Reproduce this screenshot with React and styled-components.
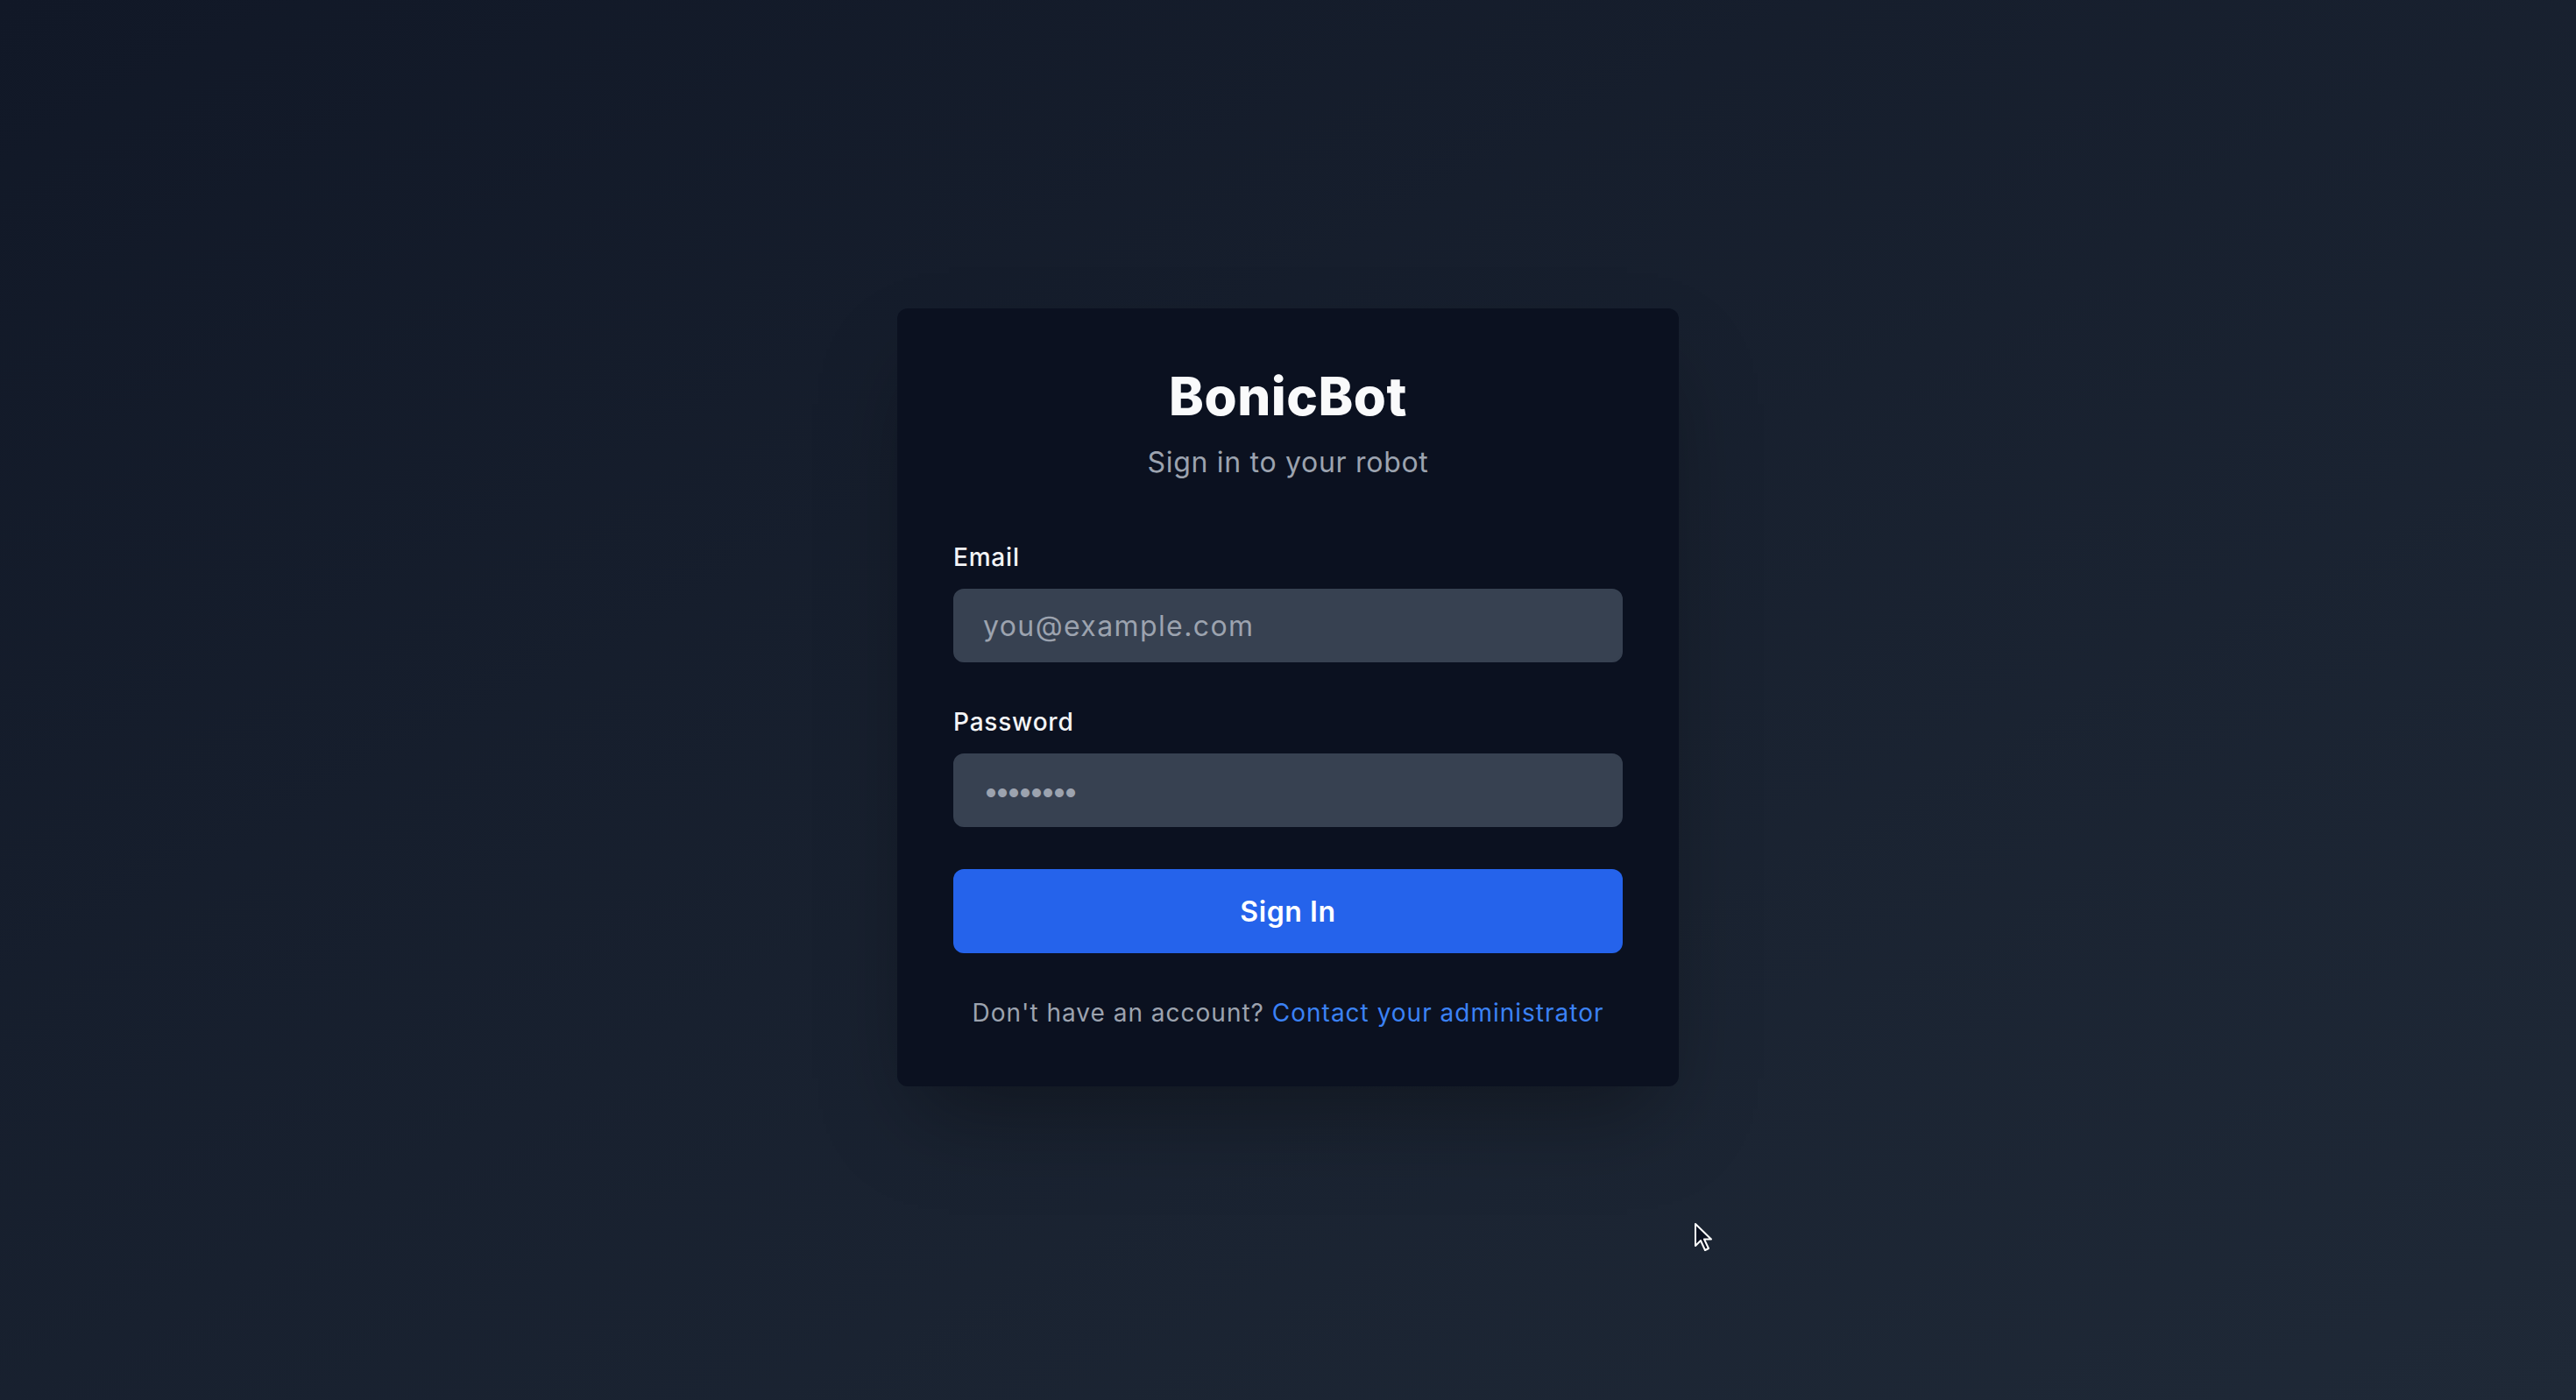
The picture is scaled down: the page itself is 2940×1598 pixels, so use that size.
import styled, { createGlobalStyle } from 'styled-components';

const GlobalStyle = createGlobalStyle`
    * {
        box-sizing: border-box;
    }
    html, body {
        margin: 0;
        padding: 0;
    }
    body {
        font-family: Inter, 'Liberation Sans', sans-serif;
        background: #111827;
    }
`;

const Page = styled.main`
    position: relative;
    min-height: 100vh;
    padding-bottom: 6px;
    display: flex;
    align-items: center;
    justify-content: center;
    background: linear-gradient(to bottom right, #111827, #1f2937);
`;

const Card = styled.section`
    width: 892px;
    padding: 64px;
    background: #0b1120;
    border-radius: 12px;
    box-shadow: 0 50px 100px -24px rgba(0, 0, 0, 0.35);
`;

const Header = styled.header`
    text-align: center;
    margin-bottom: 64px;

    h1 {
        margin: 0;
        font-size: 60px;
        line-height: 72px;
        font-weight: 800;
        color: #f9fafb;
        letter-spacing: 0.5px;
    }

    p {
        margin: 16px 0 0;
        font-size: 32px;
        line-height: 48px;
        color: #9ca3af;
        letter-spacing: 0.7px;
    }
`;

const Form = styled.form`
    display: flex;
    flex-direction: column;
    gap: 48px;
`;

const Field = styled.div`
    display: flex;
    flex-direction: column;
`;

const Label = styled.label`
    font-size: 28px;
    line-height: 40px;
    font-weight: 500;
    color: #f3f4f6;
    margin-bottom: 16px;
    letter-spacing: 0.8px;
`;

const Input = styled.input`
    height: 84px;
    width: 100%;
    padding: 0 32px;
    font-family: inherit;
    font-size: 32px;
    color: #f9fafb;
    background: #374151;
    border: 2px solid #374151;
    border-radius: 12px;
    outline: none;
    letter-spacing: ${(p) => (p.$secret ? '-5px' : '1.4px')};

    &::placeholder {
        color: #9ca3af;
    }
`;

const Button = styled.button`
    height: 96px;
    width: 100%;
    border: none;
    border-radius: 12px;
    background: #2563eb;
    color: #ffffff;
    font-family: inherit;
    font-size: 32px;
    font-weight: 600;
    letter-spacing: 0.6px;
    cursor: pointer;
`;

const Footer = styled.p`
    margin: 48px 0 0;
    text-align: center;
    font-size: 28px;
    line-height: 40px;
    color: #9ca3af;
    letter-spacing: 1px;

    a {
        color: #3b82f6;
        text-decoration: none;
    }
`;

const Cursor = styled.svg`
    position: absolute;
    left: 1933px;
    top: 1395px;
    width: 22px;
    height: 36px;
    pointer-events: none;
`;

const App = () => {
    return (
        <>
            <GlobalStyle />
            <Page>
                <Card>
                    <Header>
                        <h1>BonicBot</h1>
                        <p>Sign in to your robot</p>
                    </Header>

                    <Form onSubmit={(e) => e.preventDefault()}>
                        <Field>
                            <Label htmlFor="email">Email</Label>
                            <Input id="email" type="email" placeholder="you@example.com" />
                        </Field>
                        <Field>
                            <Label htmlFor="password">Password</Label>
                            <Input id="password" type="password" placeholder="••••••••" $secret />
                        </Field>
                        <Button type="submit">Sign In</Button>
                    </Form>

                    <Footer>
                        Don't have an account? <a href="#">Contact your administrator</a>
                    </Footer>
                </Card>

                <Cursor viewBox="0 0 22 36">
                    <path
                        d="M2 2 L2 27 L8 21 L13 32 L17 30 L12 19.5 L20 19.5 Z"
                        fill="#0b1120"
                        stroke="#ffffff"
                        strokeWidth="2"
                        strokeLinejoin="round"
                    />
                </Cursor>
            </Page>
        </>
    );
};

export default App;
